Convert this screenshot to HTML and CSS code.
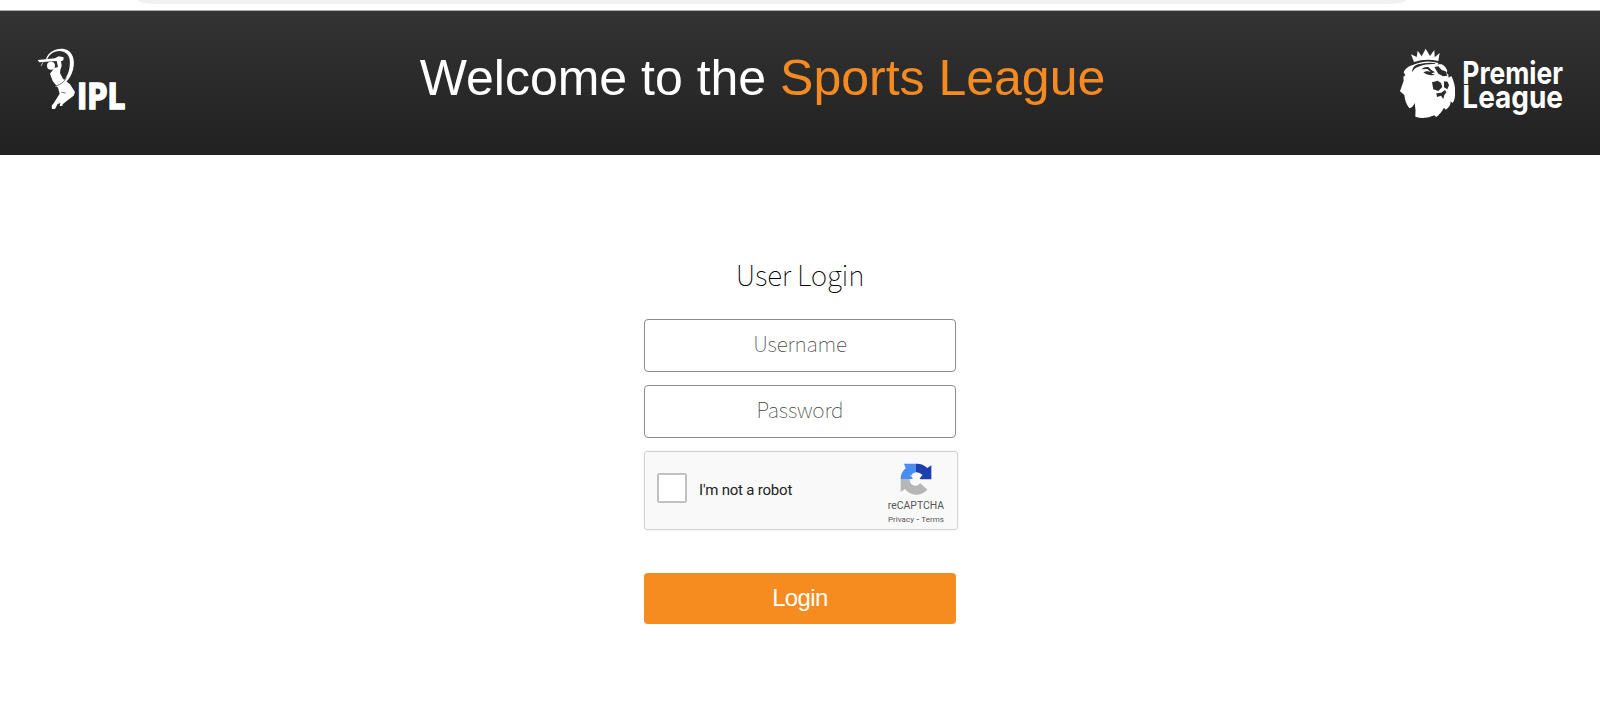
FILE: index.html
```
<!DOCTYPE html>
<html lang="en">
<head>
<meta charset="utf-8">
<title>Sports League</title>
<link rel="stylesheet" href="styles.css">
</head>
<body>
<div class="browser-edge"><div class="address-bar"></div></div>
<header class="banner">
  <svg class="ipl-logo" width="120" height="90" viewBox="0 0 360 270" fill="#fff">
    <path d="M78 72C86 49 110 38 133 42C160 48 166 78 159 104C151 133 132 153 104 155C128 145 143 126 148 101C153 75 148 56 130 50C111 44 91 53 82 72Z"/>
    <path d="M53 75L105 70L116 64L131 67L130 76L123 79L125 92L121 105L120 114L129 131L150 148L165 171L161 182L141 197L128 208L127 213H119L121 204L113 207L105 222H96L95 212L102 203L119 176L114 158L98 138L90 116L103 99L114 96L110 78L58 82Z"/>
    <circle cx="93" cy="92" r="12"/>
    <path d="M69 82L63 93" stroke="#fff" stroke-width="2"/>
    <path d="M107 153Q132 146 139 127M124 172L137 174" fill="none" stroke="#303030" stroke-width="2"/>
    <text class="ipl-word" x="171" y="222" textLength="144" lengthAdjust="spacingAndGlyphs">IPL</text>
  </svg>
  <h1 class="title">Welcome to the <span class="accent">Sports League</span></h1>
  <svg class="pl-logo" width="190" height="95" viewBox="0 0 570 285" fill="#fff">
    <path d="M87 81L78 58L95 66L98 47L110 64L122 41L135 63L148 45L149 67L164 54L160 78Q122 69 87 81Z"/>
    <path d="M81 91Q122 72 161 84L157 88L170 88Q183 95 187 108L184 113L190 119L191 128L199 123Q212 149 210 171Q212 190 203 204L197 199Q197 216 182 224L177 218Q166 238 153 246L148 241Q120 254 91 245Q93 225 89 204Q83 218 73 220Q60 203 58 180L45 169L56 137L55 125L61 121L56 112Q64 95 81 91Z"/>
    <g class="lion-lines">
      <path d="M82 112Q80 94 99 88Q122 82 148 84L152 87Q123 86 104 94Q87 99 82 112Z"/>
      <path d="M109 103Q118 94 130 96L139 105L150 112L139 115L150 120L137 121Q123 119 115 112L126 108L137 111L127 102Z"/>
      <path d="M148 96L160 94L170 105L182 109L187 122L174 124L160 116Z"/>
      <path d="M141 142L158 137L168 144L172 156L160 168L145 163Z"/>
      <path d="M177 139L188 140L192 151L187 163L177 157Z"/>
      <path d="M154 175L169 173L180 165L184 172L178 180L175 192L168 182L156 186Z"/>
    </g>
    <g class="pl-word">
      <text x="232" y="146" textLength="302" lengthAdjust="spacingAndGlyphs">Premier</text>
      <text x="232" y="219" textLength="302" lengthAdjust="spacingAndGlyphs">League</text>
    </g>
  </svg>
</header>
<main>
  <form class="login-form">
    <h2 class="form-title">User Login</h2>
    <input class="field" type="text" placeholder="Username">
    <input class="field" type="password" placeholder="Password">
    <div class="captcha">
      <div class="checkbox"></div>
      <div class="captcha-label">I'm not a robot</div>
      <div class="captcha-brand">
        <svg width="32" height="32" viewBox="0 0 96 96">
          <path fill="#4a8df0" d="M12 2H48V29Q38 28 35 35L45 48H2Q2 28 17 16Z"/>
          <path fill="#1c3fad" d="M48 2Q68 1 82 15L94 7V49H55L67 37Q60 28 48 28Z"/>
          <path fill="#b5b6b8" d="M2 48H29Q29 65 43 68Q53 70 61 61L82 80Q68 95 47 95Q27 94 15 78L2 87Z"/>
          <path fill="#f9f9f9" d="M29 35L39 39L46 27L52 32L51 39L67 34L59 47L66 53L56 55L53 67L43 65L43 55L29 51L39 46Z"/>
        </svg>
        <div class="brand-name">reCAPTCHA</div>
        <div class="brand-links">Privacy <b>-</b> Terms</div>
      </div>
    </div>
    <button class="login-button" type="button">Login</button>
  </form>
</main>
</body>
</html>
```

FILE: styles.css
```
* { box-sizing: border-box; }
body { margin: 0; background: #fff; font-family: "Liberation Sans", Arial, sans-serif; }
.browser-edge { height: 11px; border-bottom: 1px solid #a9aeab; }
.address-bar { height: 4px; margin: 0 194px 0 138px; background: #f1f1f1; border-radius: 0 0 20px 20px / 0 0 4px 4px; }
.banner { height: 144px; display: flex; justify-content: space-between; align-items: flex-start; padding: 24px 25px 0 20px; background: linear-gradient(#333, #212121); }
.title { margin: 14px 0 0; font-size: 50px; font-weight: 400; line-height: 58px; color: #fff; white-space: nowrap; }
.accent { color: #f38b22; }
.ipl-word { font: bold 104px "DejaVu Sans Condensed", "DejaVu Sans", sans-serif; stroke: #fff; stroke-width: 4px; }
.pl-word { font: 700 94px Inter, sans-serif; }
.lion-lines { fill: #2c2c2c; }
.login-form { width: 312px; margin: 98px auto 0; display: flex; flex-direction: column; font-family: "Noto Sans CJK SC", sans-serif; }
.form-title { margin: 0 0 23px; height: 43px; line-height: 42px; font-size: 28px; font-weight: 100; letter-spacing: -0.2px; text-align: center; color: #000; }
.field { height: 53px; margin: 0 0 13px; padding: 0 10px 5px; border: 1px solid #8c8c8c; border-radius: 4px; background: #fff; font-family: inherit; font-size: 21px; font-weight: 100; letter-spacing: -0.2px; text-align: center; }
.field::placeholder { color: #444; opacity: 1; }
.captcha { width: 314px; height: 79px; display: flex; align-items: flex-start; padding: 11px 13px 0 12px; background: #f9f9f9; border: 1px solid #d3d3d3; border-radius: 3px; box-shadow: 0 0 3px rgba(0,0,0,.08); font-family: Roboto, sans-serif; }
.checkbox { width: 30px; height: 30px; margin-top: 10px; border: 2px solid #c1c1c1; border-radius: 2px; background: #fff; }
.captcha-label { margin: 17px auto 0 12px; font-size: 15px; line-height: 20px; letter-spacing: -0.2px; color: #222; white-space: nowrap; }
.captcha-brand { display: flex; flex-direction: column; align-items: center; color: #555; white-space: nowrap; }
.brand-name { margin-top: 4px; font-size: 10.4px; line-height: 13px; }
.brand-links { margin-top: 1px; font-size: 8px; line-height: 13px; letter-spacing: 0.05px; }
.login-button { margin-top: 43px; height: 51px; padding: 0 0 2px; border: 0; border-radius: 4px; background: #f68b1f; color: #fff; font: 24px "Liberation Sans", Arial, sans-serif; letter-spacing: -0.6px; }
```
